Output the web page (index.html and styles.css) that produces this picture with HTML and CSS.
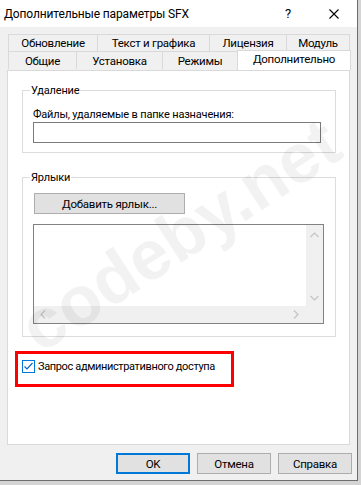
FILE: index.html
```html
<!DOCTYPE html>
<html lang="ru">
<head>
  <meta charset="UTF-8" />
  <meta name="viewport" content="width=device-width, initial-scale=1.0"/>
  <title>Дополнительные параметры SFX</title>
  <link rel="stylesheet" href="styles.css">
</head>
<body>
  <div class="window">
    <div class="titlebar">
      <span class="title">Дополнительные параметры SFX</span>
      <span class="title-btn help">?</span>
      <span class="title-btn close">
        <svg width="10" height="10" viewBox="0 0 10 10">
          <path d="M0.5 0.5 L9.5 9.5 M9.5 0.5 L0.5 9.5" stroke="#000" stroke-width="1.1" fill="none"/>
        </svg>
      </span>
    </div>

    <div class="client">
      <div class="tabs">
        <div class="tab-row back">
          <div class="tab tab-update">Обновление</div>
          <div class="tab tab-text">Текст и графика</div>
          <div class="tab tab-license">Лицензия</div>
          <div class="tab tab-module">Модуль</div>
        </div>
        <div class="tab-row front">
          <div class="tab tab-general">Общие</div>
          <div class="tab tab-setup">Установка</div>
          <div class="tab tab-modes">Режимы</div>
          <div class="tab tab-advanced active">Дополнительно</div>
        </div>
      </div>

      <div class="panel">
        <fieldset class="group group-delete">
          <legend>Удаление</legend>
          <label for="delFiles">Файлы, удаляемые в папке назначения:</label>
          <input type="text" id="delFiles" />
        </fieldset>

        <fieldset class="group group-links">
          <legend>Ярлыки</legend>
          <button type="button" class="btn btn-add">Добавить ярлык...</button>
          <div class="listbox">
            <div class="list-area"></div>
            <div class="vscroll">
              <svg width="9" height="6" viewBox="0 0 9 6"><path d="M0.5 5 L4.5 1 L8.5 5" stroke="#c4c4c4" stroke-width="1.2" fill="none"/></svg>
              <svg width="9" height="6" viewBox="0 0 9 6"><path d="M0.5 1 L4.5 5 L8.5 1" stroke="#c4c4c4" stroke-width="1.2" fill="none"/></svg>
            </div>
            <div class="hscroll">
              <svg width="6" height="9" viewBox="0 0 6 9"><path d="M5 0.5 L1 4.5 L5 8.5" stroke="#c4c4c4" stroke-width="1.2" fill="none"/></svg>
              <svg width="6" height="9" viewBox="0 0 6 9"><path d="M1 0.5 L5 4.5 L1 8.5" stroke="#c4c4c4" stroke-width="1.2" fill="none"/></svg>
            </div>
            <div class="corner"></div>
          </div>
        </fieldset>

        <div class="admin-row">
          <label class="check">
            <span class="check-box">
              <svg width="13" height="13" viewBox="0 0 13 13">
                <rect x="0.5" y="0.5" width="12" height="12" fill="#fff" stroke="#0078d7"/>
                <path d="M2.5 6.5 L5 9 L10.5 3" stroke="#0a64c8" stroke-width="1.2" fill="none"/>
              </svg>
            </span>
            <span>Запрос административного доступа</span>
          </label>
        </div>
      </div>

      <div class="buttons">
        <button type="button" class="btn btn-default">OK</button>
        <button type="button" class="btn">Отмена</button>
        <button type="button" class="btn">Справка</button>
      </div>
    </div>

    <div class="watermark">codeby.net</div>
  </div>
</body>
</html>
```

FILE: styles.css
```css
* {
  box-sizing: border-box;
}
body {
  margin: 0;
  background: #d4d4d4;
  font-family: Roboto, "Liberation Sans", sans-serif;
  font-size: 11px;
  letter-spacing: -0.18px;
  color: #000;
  overflow: hidden;
}
.window {
  position: relative;
  width: 358px;
  height: 481px;
  background: #f0f0f0;
  border-right: 1px solid #6e6e6e;
  border-bottom: 1px solid #6e6e6e;
  overflow: hidden;
}
.titlebar {
  height: 27px;
  background: #fff;
  display: flex;
  align-items: center;
}
.title {
  padding-left: 4px;
  flex: 1;
  font-size: 12px;
  letter-spacing: -0.15px;
  white-space: nowrap;
}
.title-btn {
  width: 46px;
  height: 27px;
  display: flex;
  align-items: center;
  justify-content: center;
}
.help {
  font-size: 13px;
}

/* tabs */
.client {
  padding-top: 7px;
}
.tabs {
  margin-left: 8px;
  font-size: 11.5px;
  letter-spacing: -0.25px;
}
.tab-row {
  display: flex;
}
.tab {
  border: 1px solid #d9d9d9;
  border-bottom: none;
  background: #f0f0f0;
  text-align: center;
  margin-left: -1px;
  white-space: nowrap;
}
.tab:first-child {
  margin-left: 0;
}
.back .tab {
  height: 17px;
  line-height: 17px;
}
.front .tab {
  height: 18px;
  line-height: 18px;
}
.tab-update { width: 90px; }
.tab-text { width: 113px; }
.tab-license { width: 78px; }
.tab-module { width: 64px; }
.tab-general { width: 69px; }
.tab-setup { width: 87px; }
.tab-modes { width: 76px; }
.tab-advanced { width: 114px; }
.front .tab.active {
  position: relative;
  z-index: 1;
  background: #fff;
  height: 20px;
  margin-top: -1px;
  line-height: 17px;
}

.panel {
  margin-left: 7px;
  width: 343px;
  height: 375px;
  background: #fff;
  border: 1px solid #d9d9d9;
}
.group {
  margin: 0 0 0 14px;
  width: 314px;
  border: 1px solid #dcdcdc;
  padding: 9px 0 9px 10px;
}
.group legend {
  line-height: 15px;
  padding: 0 1px;
  margin-left: -3px;
}
.group-delete {
  margin-top: 12px;
}
.group-links {
  margin-top: 17px;
  padding-top: 8px;
  padding-bottom: 12px;
}
.group label {
  display: block;
  line-height: 15px;
}
.group input {
  display: block;
  width: 288px;
  height: 21px;
  border: 1px solid #7a7a7a;
  margin: 0;
  font: inherit;
}

.btn {
  height: 21px;
  background: #e1e1e1;
  border: 1px solid #adadad;
  font: inherit;
  font-size: 11.5px;
  letter-spacing: -0.25px;
  color: #000;
  padding: 0;
}
.btn-add {
  display: block;
  width: 151px;
  margin-left: 1px;
}
.listbox {
  margin-top: 10px;
  width: 291px;
  height: 100px;
  border: 1px solid #828282;
  display: grid;
  grid-template-columns: 1fr 17px;
  grid-template-rows: 1fr 17px;
}
.list-area {
  background: #fff;
}
.vscroll {
  background: #f0f0f0;
  display: flex;
  flex-direction: column;
  align-items: center;
  justify-content: space-between;
  padding: 7px 0 5px;
}
.hscroll {
  background: #f0f0f0;
  display: flex;
  align-items: center;
  justify-content: space-between;
  padding: 0 7px 0 6px;
}
.corner {
  background: #f0f0f0;
}

.admin-row {
  margin: 14px 0 0 7px;
  width: 219px;
  height: 36px;
  border: 3px solid #f00;
  padding: 6px 0 0 4px;
}
.check {
  display: flex;
  align-items: center;
  gap: 3px;
  line-height: 13px;
  letter-spacing: -0.36px;
  white-space: nowrap;
}
.check-box {
  display: block;
  width: 13px;
  height: 13px;
}
.check-box svg {
  display: block;
}

.buttons {
  display: flex;
  justify-content: flex-end;
  gap: 7px;
  margin-top: 8px;
  padding-right: 5px;
}
.buttons .btn {
  width: 74px;
}
.btn-default {
  border: 2px solid #0078d7;
}

.watermark {
  position: absolute;
  left: -15px;
  top: 195px;
  width: 390px;
  text-align: center;
  font: bold 70px/80px "Liberation Sans", sans-serif;
  letter-spacing: 0;
  color: rgba(0, 0, 0, 0.05);
  transform: rotate(-33deg);
  pointer-events: none;
}
```
